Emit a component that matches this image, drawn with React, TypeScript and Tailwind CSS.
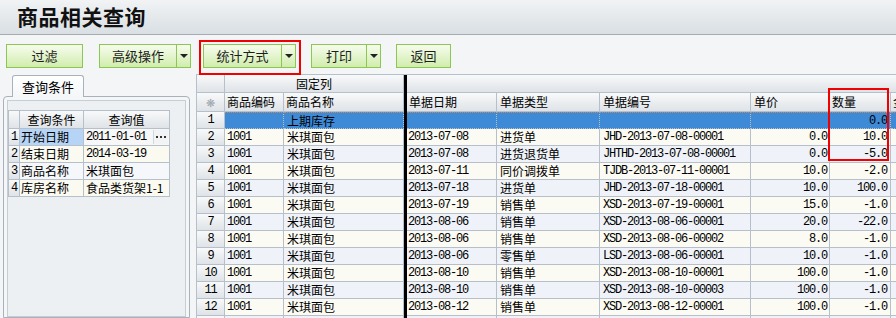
import React from "react";

const mono = "font-['Liberation_Mono','Noto_Sans_CJK_SC',monospace] tracking-[-1.2px]";
const cjk = "font-['Noto_Sans_CJK_SC','Noto_Sans',sans-serif]";
const hdr = "bg-linear-to-b from-[#f8f9fa] to-[#dfe3e7]";
const line = "border-[#b5c0cb]";

interface Row {
  no: number;
  code?: string;
  name?: string;
  date?: string;
  type?: string;
  bill?: string;
  price?: string;
  qty?: string;
}

const rows: Row[] = [
  { no: 1, name: "上期库存", qty: "0.0" },
  { no: 2, code: "1001", name: "米琪面包", date: "2013-07-08", type: "进货单", bill: "JHD-2013-07-08-00001", price: "0.0", qty: "10.0" },
  { no: 3, code: "1001", name: "米琪面包", date: "2013-07-08", type: "进货退货单", bill: "JHTHD-2013-07-08-00001", price: "0.0", qty: "-5.0" },
  { no: 4, code: "1001", name: "米琪面包", date: "2013-07-11", type: "同价调拨单", bill: "TJDB-2013-07-11-00001", price: "10.0", qty: "-2.0" },
  { no: 5, code: "1001", name: "米琪面包", date: "2013-07-18", type: "进货单", bill: "JHD-2013-07-18-00001", price: "10.0", qty: "100.0" },
  { no: 6, code: "1001", name: "米琪面包", date: "2013-07-19", type: "销售单", bill: "XSD-2013-07-19-00001", price: "15.0", qty: "-1.0" },
  { no: 7, code: "1001", name: "米琪面包", date: "2013-08-06", type: "销售单", bill: "XSD-2013-08-06-00001", price: "20.0", qty: "-22.0" },
  { no: 8, code: "1001", name: "米琪面包", date: "2013-08-06", type: "销售单", bill: "XSD-2013-08-06-00002", price: "8.0", qty: "-1.0" },
  { no: 9, code: "1001", name: "米琪面包", date: "2013-08-06", type: "零售单", bill: "LSD-2013-08-06-00001", price: "10.0", qty: "-1.0" },
  { no: 10, code: "1001", name: "米琪面包", date: "2013-08-10", type: "销售单", bill: "XSD-2013-08-10-00001", price: "100.0", qty: "-1.0" },
  { no: 11, code: "1001", name: "米琪面包", date: "2013-08-10", type: "销售单", bill: "XSD-2013-08-10-00003", price: "100.0", qty: "-1.0" },
  { no: 12, code: "1001", name: "米琪面包", date: "2013-08-12", type: "销售单", bill: "XSD-2013-08-12-00001", price: "100.0", qty: "-1.0" },
  { no: 13 },
];

const conds = [
  { k: "开始日期", v: "2011-01-01", m: true },
  { k: "结束日期", v: "2014-03-19", m: true },
  { k: "商品名称", v: "米琪面包", m: false },
  { k: "库房名称", v: "食品类货架1-1", m: false },
];

const btn =
  "h-[24px] border border-[#8dc653] bg-linear-to-b from-[#f7fcee] to-[#d0edac] flex items-center justify-center text-[13px] text-[#1e1e1e]";

const Arrow = () => (
  <div className={`w-[14px] border-l-0 ${btn}`}>
    <div className="w-0 h-0 border-x-[4px] border-t-[4px] border-x-transparent border-t-[#222]" />
  </div>
);

const App: React.FC = () => {
  return (
    <div className={`relative w-[896px] h-[318px] overflow-hidden bg-[#f3f5f7] ${cjk} text-[12px] text-black`}>
      {/* title */}
      <div className="h-[35px] border-b border-[#a6abb0] bg-linear-to-b from-[#f1f3f5] to-[#d9dfe3] flex items-center pl-[17px]">
        <span className="text-[21px] font-bold tracking-[0.5px] text-[#111]">商品相关查询</span>
      </div>

      {/* toolbar */}
      <div className="h-[39px] flex items-start pt-[9px] pl-[6px]">
        <div className={`w-[77px] ${btn}`}>过滤</div>
        <div className="flex ml-[16px]">
          <div className={`w-[78px] ${btn}`}>高级操作</div>
          <Arrow />
        </div>
        <div className="flex ml-[12px]">
          <div className={`w-[79px] ${btn}`}>统计方式</div>
          <Arrow />
        </div>
        <div className="flex ml-[15px]">
          <div className={`w-[56px] ${btn}`}>打印</div>
          <Arrow />
        </div>
        <div className={`w-[55px] ml-[15px] ${btn}`}>返回</div>
      </div>

      {/* main */}
      <div className="flex h-[244px]">
        {/* left query panel */}
        <div className="w-[187px] ml-[3px] pt-[1px] flex flex-col">
          <div className="pl-[9px] flex">
            <div className="relative z-10 -mb-[1px] w-[72px] h-[22px] border border-b-0 border-[#a9b2bb] rounded-t-[3px] bg-linear-to-b from-[#ffffff] to-[#f4f6f8] flex items-center justify-center text-[13px]">
              查询条件
            </div>
          </div>
          <div className="flex-1 border border-[#a9b2bb] rounded-t-[4px] bg-[#f4f6f8] px-[3px] pt-[3px]">
            <div className="h-full border border-[#c6cdd4] bg-[#edf0f3] pt-[9px]">
              <div className={`w-[162px] border-l border-t ${line}`}>
                <div className="flex h-[18px]">
                  <div className={`w-[11px] border-r border-b ${line} ${hdr}`} />
                  <div className={`w-[64px] border-r border-b ${line} ${hdr} flex items-center justify-center`}>查询条件</div>
                  <div className={`w-[86px] border-r border-b ${line} ${hdr} flex items-center justify-center`}>查询值</div>
                </div>
                {conds.map((c, i) => (
                  <div key={c.k} className="flex h-[17px]">
                    <div className={`w-[11px] border-r border-b ${line} ${hdr} flex items-center justify-center ${mono}`}>{i + 1}</div>
                    <div
                      className={`w-[64px] border-r border-b ${line} pl-[1px] flex items-center ${
                        i === 0 ? "bg-[#b6d4f6]" : i % 2 === 1 ? "bg-[#fbfaf1]" : "bg-[#f6f7fa]"
                      }`}
                    >
                      {c.k}
                    </div>
                    <div
                      className={`w-[86px] border-r border-b ${line} pl-[2px] pr-[1px] flex items-center justify-between ${
                        i === 0 ? "bg-[#f7f7f7]" : i % 2 === 1 ? "bg-[#fbfaf1]" : "bg-[#f6f7fa]"
                      }`}
                    >
                      <span className={c.m ? mono : ""}>{c.v}</span>
                      {i === 0 && (
                        <span className="w-[15px] h-[14px] shrink-0 border-l border-[#d2d7dc] bg-[#f2f3f5] flex items-center justify-center gap-[2px]">
                          <span className="w-[2px] h-[2px] bg-[#333]" />
                          <span className="w-[2px] h-[2px] bg-[#333]" />
                          <span className="w-[2px] h-[2px] bg-[#333]" />
                        </span>
                      )}
                    </div>
                  </div>
                ))}
              </div>
            </div>
          </div>
        </div>

        {/* result grid */}
        <div className={`flex-1 ml-[6px] border-l border-t ${line} overflow-hidden`}>
          <div className="flex h-[18px]">
            <div className={`w-[28px] shrink-0 border-r border-b ${line} ${hdr}`} />
            <div className={`w-[179px] shrink-0 border-r border-b ${line} ${hdr} flex items-center justify-center`}>固定列</div>
            <div className="w-[3px] shrink-0 bg-black" />
            <div className={`flex-1 border-b ${line} ${hdr}`} />
          </div>
          <div className="flex h-[19px]">
            <div className={`w-[28px] shrink-0 border-r border-b ${line} ${hdr} flex items-center justify-center text-[11px] text-[#a0a6ad]`}>❋</div>
            <div className={`w-[59px] shrink-0 border-r border-b ${line} ${hdr} pl-[2px] flex items-center`}>商品编码</div>
            <div className={`w-[120px] shrink-0 border-r border-b ${line} ${hdr} pl-[2px] flex items-center`}>商品名称</div>
            <div className="w-[3px] shrink-0 bg-black" />
            <div className={`w-[90px] shrink-0 border-r border-b ${line} ${hdr} pl-[2px] flex items-center`}>单据日期</div>
            <div className={`w-[103px] shrink-0 border-r border-b ${line} ${hdr} pl-[3px] flex items-center`}>单据类型</div>
            <div className={`w-[151px] shrink-0 border-r border-b ${line} ${hdr} pl-[3px] flex items-center`}>单据编号</div>
            <div className={`w-[79px] shrink-0 border-r border-b ${line} ${hdr} pl-[3px] flex items-center`}>单价</div>
            <div className={`w-[61px] shrink-0 border-r border-b ${line} ${hdr} pl-[2px] flex items-center`}>数量</div>
            <div className={`w-[80px] shrink-0 border-r border-b ${line} ${hdr} pl-[2px] flex items-center`}>金额</div>
          </div>
          {rows.map((r) => {
            const sel = r.no === 1;
            const bg = sel ? "bg-[#3e8ad7] border-t border-t-[#c98a55] border-dotted" : r.no % 2 === 0 ? "bg-[#fcfbf3]" : "bg-[#eff3f9]";
            const c = `shrink-0 border-r border-b ${line} flex items-center overflow-hidden whitespace-nowrap ${bg}`;
            return (
              <div key={r.no} className="flex h-[17px]">
                <div className={`w-[28px] shrink-0 border-r border-b ${line} ${hdr} flex items-center justify-center ${mono}`}>
                  {r.no < 13 ? r.no : ""}
                </div>
                <div className={`w-[59px] pl-[2px] ${c} ${mono}`}>{r.code}</div>
                <div className={`w-[120px] pl-[3px] ${c}`}>{r.name}</div>
                <div className="w-[3px] shrink-0 bg-black" />
                <div className={`w-[90px] pl-[1px] ${c} ${mono}`}>{r.date}</div>
                <div className={`w-[103px] pl-[3px] ${c}`}>{r.type}</div>
                <div className={`w-[151px] pl-[3px] ${c} ${mono}`}>{r.bill}</div>
                <div className={`w-[79px] pr-[2px] justify-end ${c} ${mono}`}>{r.price}</div>
                <div className={`w-[61px] pr-[3px] justify-end ${c} ${mono}`}>{r.qty}</div>
                <div className={`w-[80px] ${c}`} />
              </div>
            );
          })}
        </div>
      </div>

      {/* red highlight marks */}
      <div className="absolute left-[199px] top-[40px] w-[102px] h-[35px] border-2 border-[#f00000] pointer-events-none" />
      <div className="absolute left-[828px] top-[88px] w-[61px] h-[73px] border-2 border-[#f00000] pointer-events-none" />
    </div>
  );
};

export default App;
